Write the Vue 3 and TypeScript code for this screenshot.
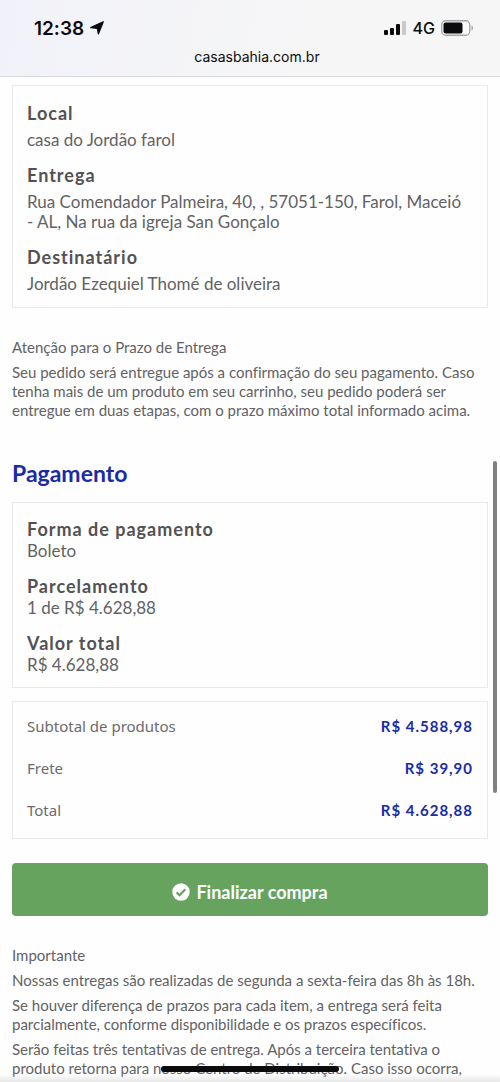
<script setup lang="ts">
interface Field {
  label: string
  value: string
}

const delivery: Field[] = [
  { label: 'Local', value: 'casa do Jordão farol' },
  {
    label: 'Entrega',
    value: 'Rua Comendador Palmeira, 40, , 57051-150, Farol, Maceió\n- AL, Na rua da igreja San Gonçalo',
  },
  { label: 'Destinatário', value: 'Jordão Ezequiel Thomé de oliveira' },
]

const payment: Field[] = [
  { label: 'Forma de pagamento', value: 'Boleto' },
  { label: 'Parcelamento', value: '1 de R$ 4.628,88' },
  { label: 'Valor total', value: 'R$ 4.628,88' },
]

const totals: Field[] = [
  { label: 'Subtotal de produtos', value: 'R$ 4.588,98' },
  { label: 'Frete', value: 'R$ 39,90' },
  { label: 'Total', value: 'R$ 4.628,88' },
]

const notes: string[] = [
  'Nossas entregas são realizadas de segunda a sexta-feira das 8h às 18h.',
  'Se houver diferença de prazos para cada item, a entrega será feita parcialmente, conforme disponibilidade e os prazos específicos.',
  'Serão feitas três tentativas de entrega. Após a terceira tentativa o produto retorna para nosso Centro de Distribuição. Caso isso ocorra,',
]
</script>

<template>
  <div class="page">
    <header class="browser-bar">
      <div class="status">
        <div class="clock">
          <span>12:38</span>
          <svg width="14" height="14" viewBox="0 0 14 14" aria-hidden="true">
            <path d="M13.2 0.8 L8.4 12.8 L7.4 7.4 L0.8 6.6 Z" fill="#0b0b0d" stroke="#0b0b0d" stroke-width="1.4" stroke-linejoin="round" />
          </svg>
        </div>
        <div class="signals">
          <svg width="23" height="14" viewBox="0 0 23 14" aria-hidden="true">
            <rect x="0" y="9" width="4" height="5" rx="1" fill="#0b0b0d" />
            <rect x="6" y="7" width="4" height="7" rx="1" fill="#0b0b0d" />
            <rect x="12" y="3" width="4" height="11" rx="1" fill="#0b0b0d" />
            <rect x="18" y="0" width="4" height="14" rx="1" fill="#c9c9cb" />
          </svg>
          <span>4G</span>
          <svg width="33" height="16" viewBox="0 0 33 16" aria-hidden="true">
            <rect x="0.75" y="0.75" width="28" height="14.5" rx="4" fill="#fafafa" stroke="#a5a5a7" stroke-width="1.3" />
            <rect x="2.5" y="2.5" width="19" height="11" rx="2" fill="#0b0b0d" />
            <path d="M30.5 5.5 C32.6 6 32.6 10 30.5 10.5 Z" fill="#a5a5a7" />
          </svg>
        </div>
      </div>
      <div class="address">casasbahia.com.br</div>
    </header>

    <main>
      <dl class="card delivery">
        <div v-for="item in delivery" :key="item.label">
          <dt>{{ item.label }}</dt>
          <dd>{{ item.value }}</dd>
        </div>
      </dl>

      <section class="notes deadline">
        <p>Atenção para o Prazo de Entrega</p>
        <p>
          Seu pedido será entregue após a confirmação do seu pagamento. Caso tenha mais de um produto em seu carrinho,
          seu pedido poderá ser entregue em duas etapas, com o prazo máximo total informado acima.
        </p>
      </section>

      <h2>Pagamento</h2>

      <dl class="card payment">
        <div v-for="item in payment" :key="item.label">
          <dt>{{ item.label }}</dt>
          <dd>{{ item.value }}</dd>
        </div>
      </dl>

      <dl class="card totals">
        <div v-for="item in totals" :key="item.label">
          <dt>{{ item.label }}</dt>
          <dd>{{ item.value }}</dd>
        </div>
      </dl>

      <button class="finish" type="button">
        <svg width="18" height="18" viewBox="0 0 18 18" aria-hidden="true">
          <circle cx="9" cy="9" r="8.7" fill="#fff" />
          <path d="M4.6 9.4 L7.6 12.3 L13.3 6.2" fill="none" stroke="#66a35f" stroke-width="2.2" />
        </svg>
        <span>Finalizar compra</span>
      </button>

      <section class="notes">
        <p>Importante</p>
        <p v-for="note in notes" :key="note">{{ note }}</p>
      </section>
    </main>

    <div class="scroll-thumb"></div>
    <div class="bottom-fade"></div>
    <div class="home-indicator"></div>
  </div>
</template>

<style>
body {
  margin: 0;
  background: #fefefe;
}
</style>

<style scoped>
.page {
  font-family: Lato, 'Open Sans', sans-serif;
  font-variant-ligatures: none;
  color: #626264;
}

.browser-bar {
  height: 76px;
  border-bottom: 1px solid #d9d9dc;
  background: linear-gradient(100deg, #f1f2f9, #f6f6f7 60%);
  font-family: Inter, 'Liberation Sans', sans-serif;
  color: #0b0b0d;
}

.status {
  display: flex;
  justify-content: space-between;
  align-items: center;
  padding: 16px 26px 0 34px;
  height: 24px;
}

.clock,
.signals {
  display: flex;
  align-items: center;
  gap: 6px;
}

.clock {
  font-size: 19px;
  font-weight: 600;
}

.signals {
  font-size: 16px;
  font-weight: 500;
}

.address {
  margin-top: 7px;
  padding-left: 14px;
  font-size: 14px;
  line-height: 20px;
  text-align: center;
}

main {
  padding: 8px 12px 0;
}

dl,
dd,
p,
h2 {
  margin: 0;
}

.card {
  border: 1px solid #e9e9ea;
  display: flex;
  flex-direction: column;
  font-size: 17px;
}

.card dt {
  color: #525254;
  font-size: 18px;
  font-weight: 700;
  letter-spacing: 1px;
}

.delivery {
  gap: 15px;
  padding: 17px 14px 13px;
  line-height: 20px;
}

.delivery dd {
  margin-top: 7px;
  white-space: pre-line;
}

.notes {
  display: flex;
  flex-direction: column;
  gap: 6px;
  font-size: 15px;
  line-height: 19px;
}

.deadline {
  margin-top: 30px;
}

h2 {
  margin: 39px 0 15px;
  color: #1a2ba6;
  font-size: 23px;
  line-height: 28px;
}

.payment {
  gap: 13px;
  padding: 15px 14px 11px;
  line-height: 22px;
}

.totals {
  margin-top: 13px;
  padding: 3px 14px 7px;
  line-height: 42px;
}

.totals div {
  display: flex;
  justify-content: space-between;
}

.totals dt {
  color: #6a6a6c;
  font-family: 'Noto Sans', sans-serif;
  font-size: 15px;
  font-weight: 400;
  letter-spacing: normal;
}

.totals dd {
  color: #1a2ba6;
  font-size: 15px;
  font-weight: 700;
  letter-spacing: 1px;
}

.finish {
  display: flex;
  justify-content: center;
  align-items: center;
  gap: 6px;
  width: 100%;
  height: 53px;
  margin: 24px 0 30px;
  padding: 4px 0 0;
  border: 0;
  border-radius: 4px;
  background: #66a35f;
  color: #fff;
  font: 700 18px Lato, 'Open Sans', sans-serif;
}

.scroll-thumb {
  position: fixed;
  top: 461px;
  right: 3px;
  width: 4px;
  height: 332px;
  border-radius: 2px;
  background: #808080;
}

.bottom-fade {
  position: fixed;
  right: 0;
  bottom: 0;
  left: 0;
  height: 8px;
  background: linear-gradient(rgb(225 225 225 / 0), rgb(225 225 225 / 0.8));
}

.home-indicator {
  position: fixed;
  bottom: 10px;
  left: 50%;
  width: 178px;
  height: 6px;
  margin-left: -89px;
  border-radius: 3px;
  background: #0b0b0d;
}
</style>
